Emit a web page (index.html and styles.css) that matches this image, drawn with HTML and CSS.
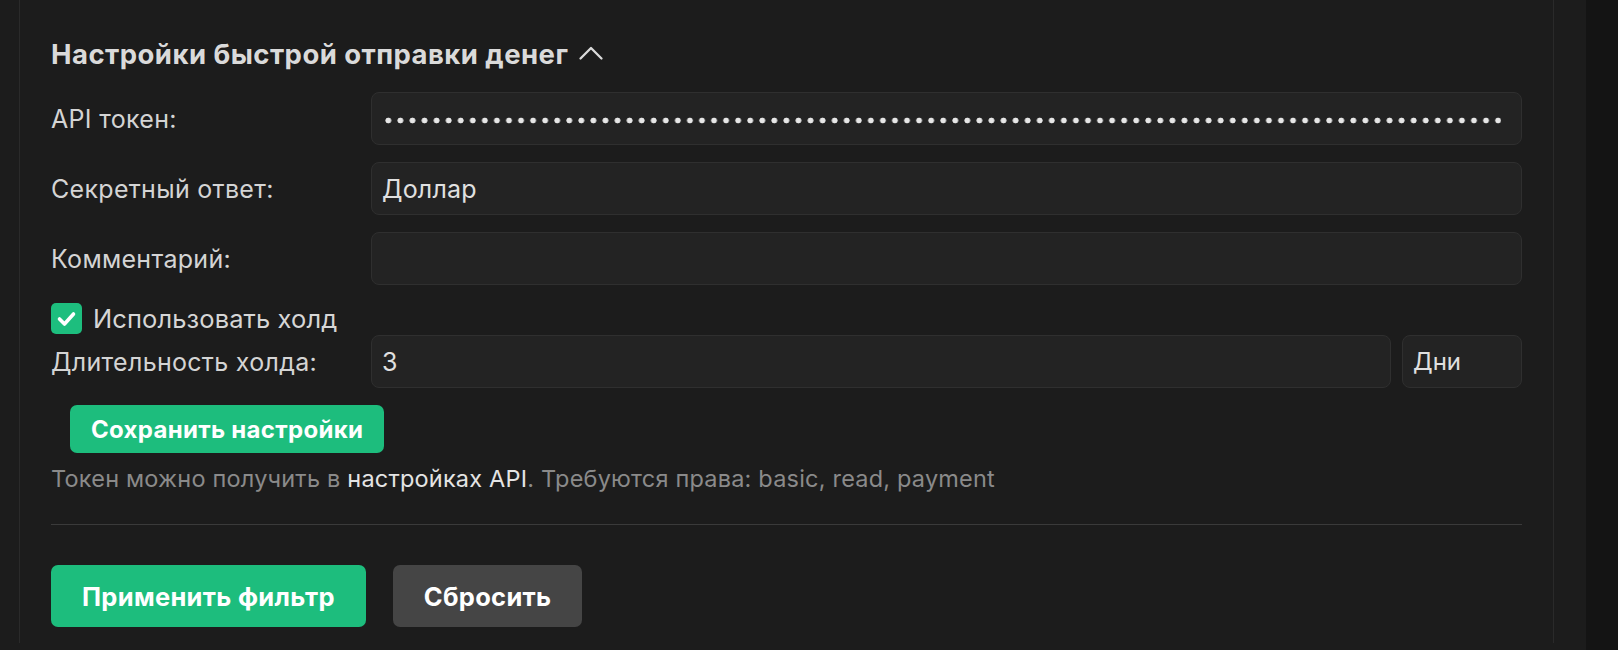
FILE: index.html
```html
<!DOCTYPE html>
<html lang="ru">
<head>
<meta charset="utf-8">
<title>Настройки быстрой отправки денег</title>
<link rel="stylesheet" href="styles.css">
</head>
<body>
<div class="main">
  <section class="card">
    <h2 class="section-title">Настройки быстрой отправки денег
      <svg class="chevron" width="26" height="26" viewBox="0 0 26 26" aria-hidden="true"><path d="M2.5 18.5 L13 8 L23.5 18.5" fill="none" stroke="currentColor" stroke-width="2.3" stroke-linecap="round" stroke-linejoin="round"/></svg>
    </h2>
    <div class="form">
      <div class="row">
        <label class="label">API токен:</label>
        <div class="input masked" role="textbox" aria-label="API токен"><span class="dots"></span></div>
      </div>
      <div class="row">
        <label class="label">Секретный ответ:</label>
        <input class="input" type="text" value="Доллар">
      </div>
      <div class="row">
        <label class="label">Комментарий:</label>
        <input class="input" type="text" value="">
      </div>
      <div class="check-row">
        <span class="checkbox"><svg width="31" height="31" viewBox="0 0 31 31" aria-hidden="true"><path d="M8.5 16 L13.5 21 L22.5 11" fill="none" stroke="#fff" stroke-width="3.6" stroke-linecap="round" stroke-linejoin="round"/></svg></span>
        <span class="check-label">Использовать холд</span>
      </div>
      <div class="row row-tight">
        <label class="label">Длительность холда:</label>
        <div class="with-unit">
          <input class="input" type="text" value="3">
          <div class="unit">Дни</div>
        </div>
      </div>
    </div>
    <button class="btn btn-save">Сохранить настройки</button>
    <p class="hint">Токен можно получить в <a class="hint-link">настройках API</a>. Требуются права: basic, read, payment</p>
    <hr class="divider">
    <div class="actions">
      <button class="btn btn-primary">Применить фильтр</button>
      <button class="btn btn-secondary">Сбросить</button>
    </div>
  </section>
</div>
<div class="side"></div>
</body>
</html>
```

FILE: styles.css
```css
* { box-sizing: border-box; }

html, body {
  margin: 0;
  height: 100%;
}

body {
  display: flex;
  background: #1c1c1c;
  font-family: "Inter", "Noto Sans", sans-serif;
  color: #d6d6d6;
  overflow: hidden;
}

.main {
  flex: 1;
  padding: 0 32px 0 19px;
}

.side {
  width: 32px;
  background: #141414;
}

.card {
  border-left: 1px solid #2a2a2a;
  border-right: 1px solid #2a2a2a;
  padding: 38px 31px 16px 31px;
}

.section-title {
  margin: 0;
  display: flex;
  align-items: center;
  gap: 10px;
  font-size: 27.5px;
  line-height: 32px;
  font-weight: 700;
  letter-spacing: 0.45px;
  color: #dadada;
}

.chevron {
  color: #dadada;
  margin-top: -2px;
}

.form {
  margin-top: 22px;
  display: flex;
  flex-direction: column;
}

.row {
  display: grid;
  grid-template-columns: 320px 1fr;
  align-items: center;
  margin-bottom: 17px;
}

.row-tight {
  margin-bottom: 0;
}

.label {
  font-size: 25px;
  letter-spacing: 0.3px;
  color: #d4d4d4;
}

.input {
  height: 53px;
  width: 100%;
  min-width: 0;
  background: #232323;
  border: 1px solid #2f2f2f;
  border-radius: 8px;
  padding: 0 10px;
  font-family: inherit;
  font-size: 25px;
  letter-spacing: 0.2px;
  color: #e0e0e0;
  outline: none;
}

.masked {
  display: flex;
  align-items: center;
  padding: 0 12px;
}

.dots {
  display: block;
  width: calc(100% - 8px);
  height: 7px;
  margin-top: 4px;
  background-image: radial-gradient(circle, #e6e6e6 0 2.6px, transparent 3.2px);
  background-size: 12.07px 7px;
  background-repeat: repeat-x;
  background-position: -1.7px 0;
}

.check-row {
  display: flex;
  align-items: center;
  gap: 11px;
  height: 33px;
}

.checkbox {
  width: 31px;
  height: 31px;
  border-radius: 5px;
  background: #1dbe7e;
  display: flex;
}

.check-label {
  font-size: 25.5px;
  letter-spacing: 0.1px;
  color: #d6d6d6;
}

.with-unit {
  display: flex;
  gap: 11px;
}

.unit {
  flex: 0 0 120px;
  height: 53px;
  background: #232323;
  border: 1px solid #2f2f2f;
  border-radius: 8px;
  padding: 0 10px;
  display: flex;
  align-items: center;
  font-size: 24px;
  color: #e0e0e0;
}

.btn {
  border: none;
  font-family: inherit;
  font-weight: 700;
  color: #ffffff;
  border-radius: 7px;
  cursor: pointer;
}

.btn-save {
  margin: 17px 0 0 19px;
  height: 48px;
  padding: 0 21px;
  font-size: 24px;
  letter-spacing: 0.3px;
  background: #1dbd7d;
}

.hint {
  margin: 11px 0 0 0;
  font-size: 23.5px;
  letter-spacing: 0.2px;
  line-height: 30px;
  color: #8a8a8a;
}

.hint-link {
  color: #e4e4e4;
}

.divider {
  margin: 30px 0 0 0;
  border: none;
  border-top: 1px solid #3a3a3a;
  height: 0;
}

.actions {
  margin-top: 40px;
  display: flex;
  gap: 27px;
}

.btn-primary,
.btn-secondary {
  height: 62px;
  padding: 0 31px;
  font-size: 25.5px;
  letter-spacing: 0.3px;
}

.btn-primary {
  background: #1dbd7d;
}

.btn-secondary {
  background: #454545;
}
```
